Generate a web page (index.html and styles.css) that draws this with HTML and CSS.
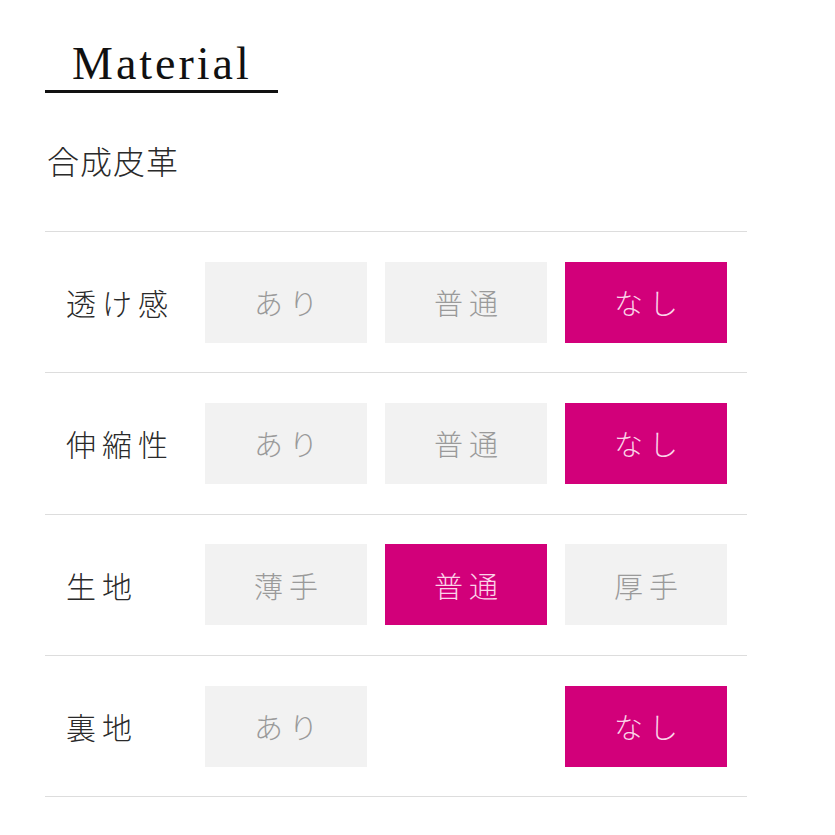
FILE: index.html
```html
<!DOCTYPE html>
<html lang="ja">
<head>
<meta charset="utf-8">
<link rel="stylesheet" href="styles.css">
</head>
<body>
<div class="page">
  <h2 class="title"><span>Material</span></h2>
  <p class="material">合成皮革</p>
  <div class="rows">
    <div class="row">
      <div class="label">透け感</div>
      <div class="opts">
        <div class="opt">あり</div>
        <div class="opt">普通</div>
        <div class="opt on">なし</div>
      </div>
    </div>
    <div class="row">
      <div class="label">伸縮性</div>
      <div class="opts">
        <div class="opt">あり</div>
        <div class="opt">普通</div>
        <div class="opt on">なし</div>
      </div>
    </div>
    <div class="row">
      <div class="label">生地</div>
      <div class="opts">
        <div class="opt">薄手</div>
        <div class="opt on">普通</div>
        <div class="opt">厚手</div>
      </div>
    </div>
    <div class="row">
      <div class="label">裏地</div>
      <div class="opts">
        <div class="opt">あり</div>
        <div class="opt blank"></div>
        <div class="opt on">なし</div>
      </div>
    </div>
  </div>
</div>
</body>
</html>
```
FILE: styles.css
```css
html, body {
  margin: 0;
  padding: 0;
  background: #fff;
}
.page {
  padding: 38px 0 0 45px;
  width: 702px;
  font-family: "Noto Sans CJK JP", "Noto Sans", sans-serif;
  color: #222;
}
.title {
  margin: 0;
  width: 233px;
  border-bottom: 3px solid #111;
  font-family: "Liberation Serif", serif;
  font-weight: normal;
  font-size: 46px;
  letter-spacing: 3px;
  line-height: 52px;
  padding: 0 0 0 27px;
  box-sizing: border-box;
  color: #111;
}
.material {
  margin: 0;
  padding: 47px 0 0 2px;
  height: 91px;
  font-size: 32px;
  font-weight: 300;
  line-height: 40px;
  letter-spacing: 1px;
  color: #2a2a2a;
  border-bottom: 1px solid #ddd;
  box-sizing: content-box;
}
.rows {
  display: flex;
  flex-direction: column;
}
.row {
  display: flex;
  align-items: center;
  height: 140.3px;
  border-bottom: 1px solid #ddd;
}
.label {
  flex: 0 0 160px;
  padding-left: 21px;
  box-sizing: border-box;
  font-size: 30px;
  font-weight: 300;
  letter-spacing: 6px;
  color: #2a2a2a;
}
.opts {
  display: flex;
  gap: 18px;
}
.opt {
  width: 162px;
  height: 81px;
  display: flex;
  align-items: center;
  justify-content: center;
  background: #f2f2f2;
  color: #9a9a9a;
  font-size: 29px;
  font-weight: 300;
  letter-spacing: 6px;
  text-indent: 6px;
}
.opt.on {
  background: #d2007a;
  color: #fbd3e8;
}
.opt.blank {
  background: transparent;
}
```
